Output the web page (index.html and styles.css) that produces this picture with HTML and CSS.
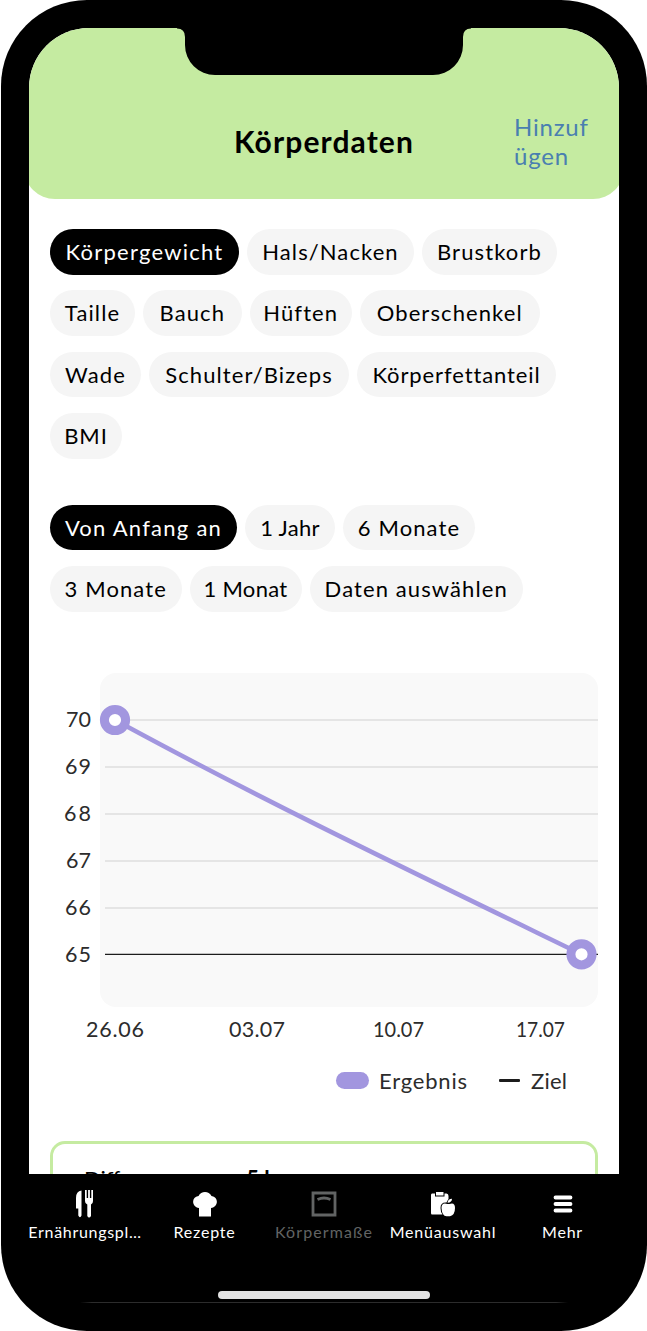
FILE: index.html
```html
<!DOCTYPE html>
<html lang="de">
<head>
    <meta charset="UTF-8">
    <meta name="viewport" content="width=device-width, initial-scale=1.0">
    <title>Körperdaten</title>
    <link rel="stylesheet" href="styles.css">
</head>
<body>
    <div class="phone">
        <svg class="notch" width="294" height="50" viewBox="0 0 294 50">
            <path d="M0 0V.5Q8 .5 8 9V17A30 30 0 0 0 38 47H256A30 30 0 0 0 286 17V9Q286 .5 294 .5V0Z"/>
        </svg>
        <div class="screen">
            <header class="header">
                <h1 class="title">Körperdaten</h1>
                <a class="add">Hinzuf<br>ügen</a>
            </header>

            <main class="content">
                <div class="chips">
                    <span class="chip active koerpergewicht">Körpergewicht</span>
                    <span class="chip hals">Hals/Nacken</span>
                    <span class="chip brustkorb">Brustkorb</span>
                    <span class="chip taille">Taille</span>
                    <span class="chip bauch">Bauch</span>
                    <span class="chip hueften">Hüften</span>
                    <span class="chip oberschenkel">Oberschenkel</span>
                    <span class="chip wade">Wade</span>
                    <span class="chip schulter">Schulter/Bizeps</span>
                    <span class="chip fett">Körperfettanteil</span>
                    <span class="chip bmi">BMI</span>
                </div>

                <div class="chips">
                    <span class="chip active anfang">Von Anfang an</span>
                    <span class="chip jahr">1 Jahr</span>
                    <span class="chip monate6">6 Monate</span>
                    <span class="chip monate3">3 Monate</span>
                    <span class="chip monat">1 Monat</span>
                    <span class="chip daten">Daten auswählen</span>
                </div>

                <svg class="chart" width="548" height="376" viewBox="50 673 548 376">
                    <rect class="plot" x="100" y="673" width="498" height="334" rx="16"/>
                    <path class="grid" d="M105 720H598M105 767H598M105 814H598M105 861H598M105 908H598"/>
                    <path class="goal" d="M105 954.3H598"/>
                    <path class="line" d="M115 720C262 800 408 870 581 954"/>
                    <circle class="dot" cx="115" cy="720" r="10.6"/>
                    <circle class="dot" cx="581.5" cy="954.3" r="10.6"/>
                    <g class="labels">
                        <text x="66" y="727" textLength="25">70</text>
                        <text x="65" y="774" textLength="26">69</text>
                        <text x="64" y="821" textLength="27">68</text>
                        <text x="66" y="868" textLength="25">67</text>
                        <text x="65" y="915" textLength="26">66</text>
                        <text x="65" y="962" textLength="26">65</text>
                        <text x="86" y="1036.5" textLength="58">26.06</text>
                        <text x="229" y="1036.5" textLength="56">03.07</text>
                        <text x="373" y="1036.5" textLength="51" lengthAdjust="spacingAndGlyphs">10.07</text>
                        <text x="516" y="1036.5" textLength="49" lengthAdjust="spacingAndGlyphs">17.07</text>
                    </g>
                </svg>

                <div class="legend">
                    <span class="swatch"></span><span class="ergebnis">Ergebnis</span>
                    <span class="dash"></span><span class="ziel">Ziel</span>
                </div>

                <div class="card">
                    <span class="diff">Differenz:</span><b>-5 kg</b>
                </div>
            </main>

            <nav class="tabs">
                <div class="tab t1">
                    <svg width="20" height="28" viewBox="0 0 20 28">
                        <path d="M6.500 .5V25.500Q5 29 3.300 25.500V18.500H1V8Q1 1 6.500 .5Z"/>
                        <path d="M10 0H11.700V8H13.100V0H14.900V8H16.300V0H18V11Q18 14 16 14.500V26Q14 29 12.300 26V14.500Q10 14 10 11Z"/>
                    </svg>
                    <span>Ernährungspl…</span>
                </div>
                <div class="tab t2">
                    <svg width="24" height="28" viewBox="0 0 24 28">
                        <path d="M6 26.500V18C-1.500 17-2 7 5.500 6C8 .5 16 .5 18.500 6C26 7 25.500 17 18 18V26.500Z"/>
                    </svg>
                    <span>Rezepte</span>
                </div>
                <div class="tab t3">
                    <svg class="scale" width="26" height="28" viewBox="0 0 26 28">
                        <path d="M2 3H24V25H2ZM6.500 9.500Q13 6.500 19.500 9.500"/>
                    </svg>
                    <span>Körpermaße</span>
                </div>
                <div class="tab t4">
                    <svg width="26" height="28" viewBox="0 0 26 28">
                        <path d="M2 3.500H5V6.500H14.500V3.500H16.500Q18.500 3.500 18.500 6V9Q17 11 16.500 12.500Q10.500 12 10.500 18Q10.500 22 12.500 24.500H2Q1 24.500 1 23V5Q1 3.500 2 3.500Z"/>
                        <path d="M6 2H13.500V5.500H6Z"/>
                        <path d="M17.500 14Q11.500 12 11.500 18Q12 26 16.500 26.300H20Q25 25 25 18Q25 12 19.500 14ZM17.500 12.800Q18 9 22 8.800Q22 12.500 17.500 12.800Z"/>
                    </svg>
                    <span>Menüauswahl</span>
                </div>
                <div class="tab t5">
                    <svg class="menu" width="20" height="28" viewBox="0 0 20 28">
                        <path d="M2.500 7.500H17.500M2.500 14H17.500M2.500 20.500H17.500"/>
                    </svg>
                    <span>Mehr</span>
                </div>
            </nav>
            <div class="home"></div>
        </div>
    </div>
</body>
</html>
```
FILE: styles.css
```css
* {
    box-sizing: border-box;
}
body {
    margin: 0;
    background: #fff;
    font-family: Lato, "Liberation Sans", sans-serif;
    font-size: 22px;
    color: #000;
}
.phone {
    position: relative;
    width: 646px;
    height: 1331px;
    margin-left: 1px;
    padding: 28px;
    background: #000;
    border-radius: 86px;
}
.notch {
    position: absolute;
    left: 176px;
    top: 28px;
    z-index: 2;
}
.screen {
    display: flex;
    flex-direction: column;
    width: 590px;
    height: 1275px;
    background: #fff;
    border-radius: 60px 60px 0 0;
    overflow: hidden;
}
.header {
    display: grid;
    grid-template-columns: 480px 1fr;
    flex: none;
    height: 170.500px;
    margin: 0 -5px;
    padding: 84px 0 0 10px;
    background: #c5eba1;
    border-radius: 0 0 31px 31px;
}
.title {
    margin: 11px 0 0;
    padding-left: 100px;
    font-size: 30px;
    line-height: 36px;
    text-align: center;
    letter-spacing: 1.100px;
}
.add {
    color: #4a7fb0;
    font-size: 24px;
    line-height: 29px;
    letter-spacing: 0.800px;
}
.content {
    flex: 1;
    min-height: 0;
    padding: 30.500px 21px 0;
    overflow: hidden;
}
.chips {
    display: flex;
    flex-wrap: wrap;
    gap: 15.500px 8px;
    margin-bottom: 46px;
}
.chip {
    height: 45.800px;
    border-radius: 23px;
    background: #f5f5f5;
    line-height: 46px;
    text-align: center;
    letter-spacing: 1.100px;
    white-space: nowrap;
}
.chip.active {
    background: #000;
    color: #fff;
    letter-spacing: 1.250px;
}
.koerpergewicht { width: 189px; }
.hals { width: 167px; }
.brustkorb { width: 135px; }
.taille { width: 85px; }
.bauch { width: 98.500px; }
.hueften { width: 102.500px; }
.oberschenkel { width: 179.500px; }
.wade { width: 91px; }
.schulter { width: 200px; }
.fett { width: 199px; }
.bmi { width: 72px; }
.anfang { width: 187px; }
.jahr { width: 90px; }
.monate6 { width: 132px; }
.monate3 { width: 131.500px; }
.monat { width: 112px; }
.daten { width: 213.500px; }
.jahr,
.monat {
    letter-spacing: 0.300px;
}
.bmi,
.fett {
    letter-spacing: 0.900px;
}
.chart {
    display: block;
    margin-top: 61px;
}
.plot {
    fill: #f9f9f9;
}
.grid {
    stroke: #dedede;
    stroke-width: 1.500;
}
.goal {
    stroke: #1c1c1c;
    stroke-width: 1.300;
}
.line {
    fill: none;
    stroke: #a296df;
    stroke-width: 4.500;
}
.dot {
    fill: #fff;
    stroke: #a296df;
    stroke-width: 9;
}
.labels {
    font-size: 21.500px;
    fill: #2c2c2c;
}
.legend {
    display: flex;
    align-items: center;
    height: 30px;
    margin-top: 17px;
    padding-left: 286px;
    color: #2c2c2c;
    letter-spacing: 0.800px;
}
.swatch {
    width: 33px;
    height: 17px;
    margin-right: 10px;
    border-radius: 8.500px;
    background: #a296df;
}
.ergebnis {
    width: 120px;
}
.dash {
    width: 21px;
    height: 3px;
    margin-right: 11px;
    border-radius: 1px;
    background: #1c1c1c;
}
.ziel {
    letter-spacing: 0.200px;
}
.card {
    display: flex;
    height: 100px;
    margin-top: 45px;
    padding: 21px 31px;
    border: 3px solid #c5eba1;
    border-radius: 15px;
}
.diff {
    width: 154px;
}
.tabs {
    display: flex;
    flex: none;
    height: 117px;
    padding-top: 16px;
    background: #000;
    color: #fff;
    font-size: 16px;
}
.tab {
    display: flex;
    flex-direction: column;
    align-items: center;
    flex: none;
    letter-spacing: 0.800px;
    white-space: nowrap;
}
.tab svg {
    fill: #fff;
}
.tab span {
    line-height: 28px;
}
.t1 {
    width: 112px;
}
.t1 span {
    letter-spacing: 0.700px;
}
.t2 {
    width: 127px;
}
.t3 {
    width: 112px;
    color: #626464;
    letter-spacing: 1.100px;
}
.t4 {
    width: 126px;
}
.t5 {
    width: 113px;
}
.tab .scale {
    fill: none;
    stroke: #626464;
    stroke-width: 2.800;
}
.tab .menu {
    stroke: #fff;
    stroke-width: 3.800;
    stroke-linecap: round;
}
.home {
    flex: none;
    height: 12px;
    background: #000;
}
.home::before {
    content: "";
    display: block;
    width: 212px;
    height: 8px;
    margin: 0 auto;
    border-radius: 4px;
    background: #e2e2e2;
}
.home::after {
    content: "";
    display: block;
    width: 488px;
    height: 1px;
    margin: 3px auto 0;
    background: linear-gradient(90deg, #000, #2c2c2c 12px, #2c2c2c 476px, #000);
}
```
